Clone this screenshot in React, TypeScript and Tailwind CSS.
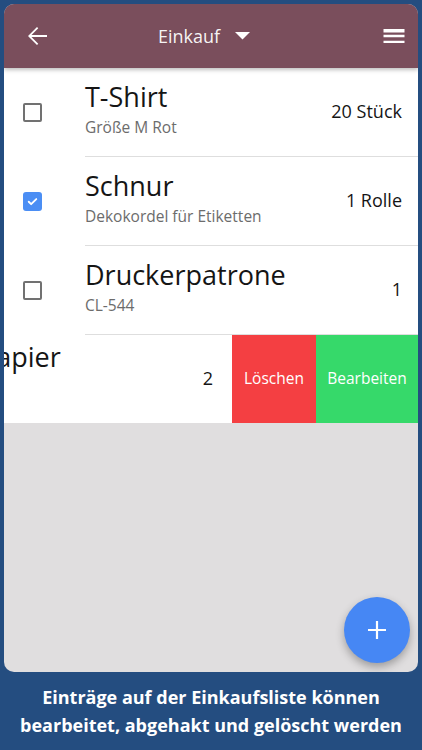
import React from "react";

type Item = {
  title: string;
  note?: string;
  qty: string;
  done?: boolean;
};

const items: Item[] = [
  { title: "T-Shirt", note: "Größe M Rot", qty: "20 Stück" },
  { title: "Schnur", note: "Dekokordel für Etiketten", qty: "1 Rolle", done: true },
  { title: "Druckerpatrone", note: "CL-544", qty: "1" },
];

function CheckBox({ checked }: { checked?: boolean }) {
  if (checked) {
    return (
      <div className="w-[19px] h-[19px] rounded-[3px] bg-[#4b8ef4] flex items-center justify-center">
        <svg width="13" height="13" viewBox="0 0 24 24">
          <path
            d="M5 12.5l4.5 4.5L19 7.5"
            fill="none"
            stroke="white"
            strokeWidth="3.4"
            strokeLinecap="round"
            strokeLinejoin="round"
          />
        </svg>
      </div>
    );
  }
  return <div className="w-[19px] h-[19px] rounded-[2px] border-[2.5px] border-[#717171]" />;
}

function Row({ item }: { item: Item }) {
  return (
    <div className="flex h-[89px] bg-white shrink-0">
      <div className="w-[81px] flex items-center pl-[19px]">
        <CheckBox checked={item.done} />
      </div>
      <div className="flex-1 flex items-center border-b border-[#dedede] pr-[16px]">
        <div className="flex-1 flex flex-col pb-[6px]">
          <span className="text-[27px] leading-[32px] text-[#151515]">{item.title}</span>
          <span className="text-[15.5px] leading-[20px] text-[#6c6c6c] mt-[4px]">{item.note}</span>
        </div>
        <span className="text-[18px] leading-[27px] text-[#151515] mb-[2px]">{item.qty}</span>
      </div>
    </div>
  );
}

// row swiped to the left, showing its actions
function SwipedRow() {
  return (
    <div className="flex h-[88px] bg-white shrink-0">
      <div className="w-[228px] flex items-center overflow-hidden pr-[19px]">
        <span className="self-start mt-[6px] ml-[-24px] text-[27px] leading-[32px] text-[#151515]">
          Papier
        </span>
        <span className="ml-auto text-[18px] leading-[27px] text-[#151515] mb-[2px]">2</span>
      </div>
      <div className="w-[84px] bg-[#f43f42] flex items-center justify-center text-[15.5px] text-white">
        Löschen
      </div>
      <div className="flex-1 bg-[#36d96a] flex items-center justify-center text-[15.5px] text-white">
        Bearbeiten
      </div>
    </div>
  );
}

export default function App() {
  return (
    <div className="w-[422px] h-[750px] bg-[#244d80] flex flex-col px-[4px] pt-[4px] font-['Open_Sans',sans-serif]">
      <div className="relative h-[668px] shrink-0 rounded-[10px] overflow-hidden bg-[#e0dedf] flex flex-col">
        {/* Header */}
        <div className="relative z-10 h-[64px] shrink-0 bg-[#7a4e5c] flex items-center pl-[18px] pr-[10px] shadow-[0_2px_4px_rgba(0,0,0,0.25)]">
          <svg width="30" height="30" viewBox="0 0 24 24" fill="white">
            <path d="M20 11.2H7.6l5.4-5.4L12 4.8 4.8 12l7.2 7.2 1-1-5.4-5.4H20z" />
          </svg>
          <span className="ml-[106px] text-[18px] text-white/95">Einkauf</span>
          <svg className="ml-[15px]" width="15" height="8" viewBox="0 0 15 8" fill="white">
            <path d="M0 0h15L7.5 7.5z" />
          </svg>
          <svg className="ml-auto" width="28" height="28" viewBox="0 0 24 24" fill="white">
            <path d="M3 18h18v-2H3v2zm0-5h18v-2H3v2zm0-6v2h18V6H3z" />
          </svg>
        </div>

        {/* List */}
        {items.map((item) => (
          <Row key={item.title} item={item} />
        ))}
        <SwipedRow />

        {/* FAB */}
        <div className="absolute right-[8px] bottom-[9px] w-[66px] h-[66px] rounded-full bg-[#4687f4] shadow-[0_4px_8px_rgba(0,0,0,0.3)] flex items-center justify-center">
          <svg width="20" height="20" viewBox="0 0 20 20">
            <path d="M10 1v18M1 10h18" stroke="white" strokeWidth="2.2" />
          </svg>
        </div>
      </div>

      {/* Caption */}
      <div className="flex-1 flex items-center justify-center text-center text-white font-bold text-[18px] leading-[28px]">
        <p>
          Einträge auf der Einkaufsliste können
          <br />
          bearbeitet, abgehakt und gelöscht werden
        </p>
      </div>
    </div>
  );
}
